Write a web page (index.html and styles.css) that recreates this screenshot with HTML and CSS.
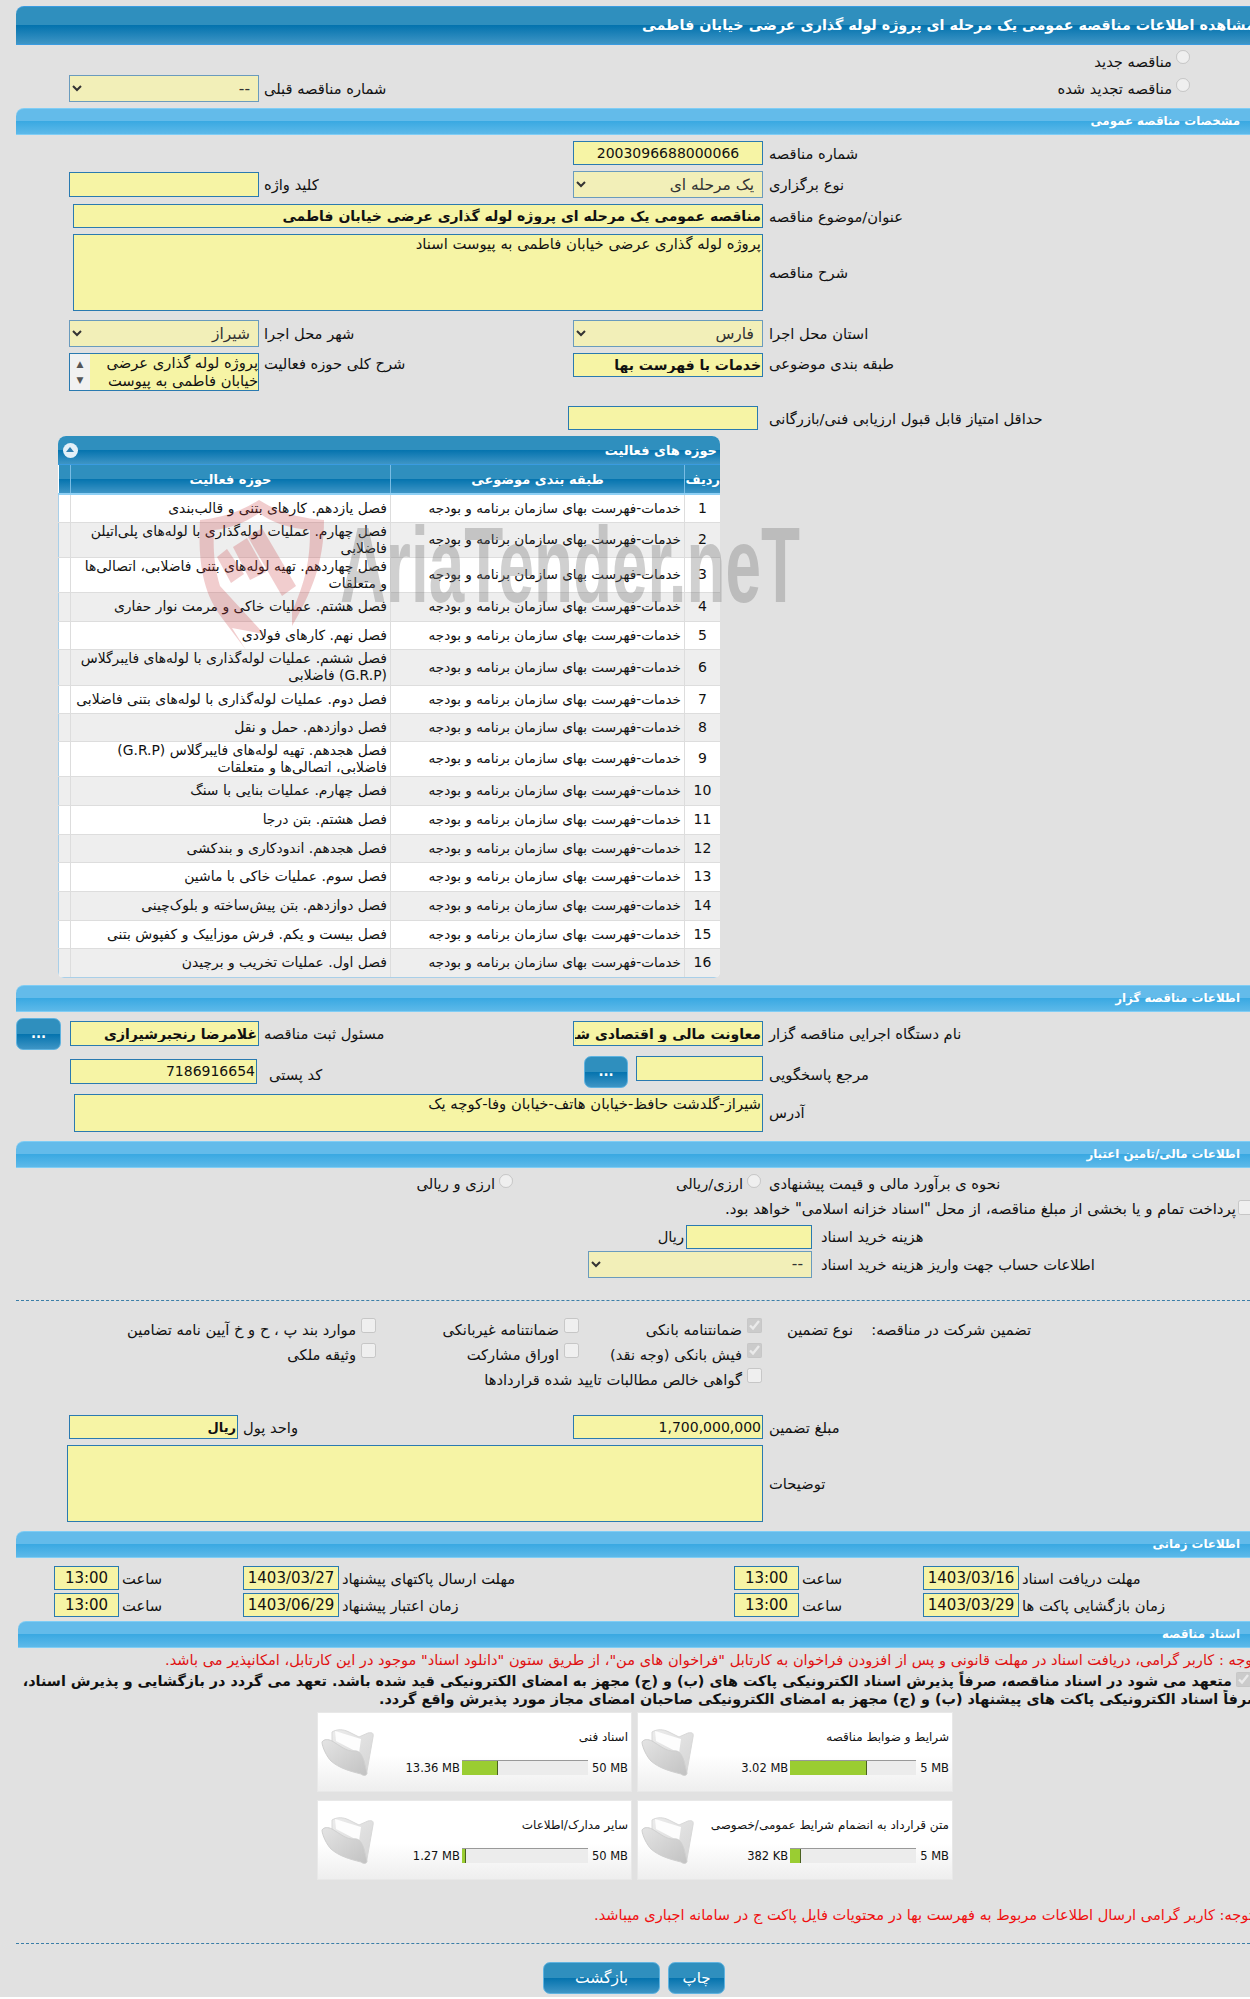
FILE: index.html
```html
<!DOCTYPE html>
<html lang="fa">
<head>
	<meta charset="utf-8">
	<title>مشاهده اطلاعات مناقصه</title>
	<link rel="stylesheet" href="styles.css">
</head>
<body>
<div class="page">
	<div class="page-title"><span dir="rtl">مشاهده اطلاعات مناقصه عمومی یک مرحله ای پروژه لوله گذاری عرضی خیابان فاطمی</span></div>

	<!-- نوع مناقصه -->
	<div class="row row-radio1">
		<div></div><div></div><div></div>
		<label class="opt opt-main"><input type="radio" disabled><span>مناقصه جدید</span></label>
	</div>
	<div class="row row-prev">
		<select class="ctl sel w-190" disabled><option>--</option></select>
		<div class="lbl lbl-b">شماره مناقصه قبلی</div>
		<div></div>
		<label class="opt opt-main"><input type="radio" disabled><span>مناقصه تجدید شده</span></label>
	</div>

	<div class="sec sec-1">مشخصات مناقصه عمومی</div>
	<div class="row mt-6">
		<div></div><div></div>
		<input class="ctl w-190 txt-center" value="2003096688000066" dir="ltr" readonly>
		<div class="lbl">شماره مناقصه</div>
	</div>
	<div class="row mt-6">
		<input class="ctl w-190 h-25" readonly>
		<div class="lbl lbl-b">کلید واژه</div>
		<select class="ctl sel w-190" disabled><option>یک مرحله ای</option></select>
		<div class="lbl">نوع برگزاری</div>
	</div>
	<div class="row mt-6">
		<input class="ctl span-3 w-690 bold" value="مناقصه عمومی یک مرحله ای پروژه لوله گذاری عرضی خیابان فاطمی" readonly>
		<div class="lbl">عنوان/موضوع مناقصه</div>
	</div>
	<div class="row mt-6">
		<textarea class="ctl span-3 w-690 h-77" readonly>پروژه لوله گذاری عرضی خیابان فاطمی به پیوست اسناد</textarea>
		<div class="lbl">شرح مناقصه</div>
	</div>
	<div class="row mt-9">
		<select class="ctl sel w-190" disabled><option>شیراز</option></select>
		<div class="lbl lbl-b">شهر محل اجرا</div>
		<select class="ctl sel w-190" disabled><option>فارس</option></select>
		<div class="lbl">استان محل اجرا</div>
	</div>
	<div class="row row-top mt-6">
		<div class="listbox w-190">
			<div class="listbox-bar"><span>▲</span><span>▼</span></div>
			<div class="listbox-text">پروژه لوله گذاری عرضی خیابان فاطمی به پیوست</div>
		</div>
		<div class="lbl lbl-b">شرح کلی حوزه فعالیت</div>
		<input class="ctl w-190 bold" value="خدمات با فهرست بها" readonly>
		<div class="lbl">طبقه بندی موضوعی</div>
	</div>
	<div class="row row-score">
		<div></div><div></div>
		<input class="ctl w-190 shift-5" readonly>
		<div class="lbl">حداقل امتیاز قابل قبول ارزیابی فنی/بازرگانی</div>
	</div>

	<!-- حوزه های فعالیت -->
	<div class="panel">
		<div class="panel-head">
			<span class="panel-toggle"></span>
			<span class="panel-title" dir="rtl">حوزه های فعالیت</span>
		</div>
		<table class="grid" dir="rtl">
			<thead>
				<tr><th class="c-n">ردیف</th><th class="c-s">طبقه بندی موضوعی</th><th class="c-a">حوزه فعالیت</th><th class="c-x"></th></tr>
			</thead>
			<tbody>
				<tr class="h28"><td class="c-n">1</td><td>خدمات-فهرست بهای سازمان برنامه و بودجه</td><td>فصل یازدهم. کارهای بتنی و قالب‌بندی</td><td></td></tr>
				<tr class="alt h35"><td class="c-n">2</td><td>خدمات-فهرست بهای سازمان برنامه و بودجه</td><td>فصل چهارم. عملیات لوله‌گذاری با لوله‌های پلی‌اتیلن فاضلابی</td><td></td></tr>
				<tr class="h35"><td class="c-n">3</td><td>خدمات-فهرست بهای سازمان برنامه و بودجه</td><td>فصل چهاردهم. تهیه لوله‌های بتنی فاضلابی، اتصالی‌ها و متعلقات</td><td></td></tr>
				<tr class="alt h29"><td class="c-n">4</td><td>خدمات-فهرست بهای سازمان برنامه و بودجه</td><td>فصل هشتم. عملیات خاکی و مرمت نوار حفاری</td><td></td></tr>
				<tr class="h28"><td class="c-n">5</td><td>خدمات-فهرست بهای سازمان برنامه و بودجه</td><td>فصل نهم. کارهای فولادی</td><td></td></tr>
				<tr class="alt h36"><td class="c-n">6</td><td>خدمات-فهرست بهای سازمان برنامه و بودجه</td><td>فصل ششم. عملیات لوله‌گذاری با لوله‌های فایبرگلاس (G.R.P) فاضلابی</td><td></td></tr>
				<tr class="h28"><td class="c-n">7</td><td>خدمات-فهرست بهای سازمان برنامه و بودجه</td><td>فصل دوم. عملیات لوله‌گذاری با لوله‌های بتنی فاضلابی</td><td></td></tr>
				<tr class="alt h28"><td class="c-n">8</td><td>خدمات-فهرست بهای سازمان برنامه و بودجه</td><td>فصل دوازدهم. حمل و نقل</td><td></td></tr>
				<tr class="h35"><td class="c-n">9</td><td>خدمات-فهرست بهای سازمان برنامه و بودجه</td><td>فصل هجدهم. تهیه لوله‌های فایبرگلاس (G.R.P) فاضلابی، اتصالی‌ها و متعلقات</td><td></td></tr>
				<tr class="alt h29"><td class="c-n">10</td><td>خدمات-فهرست بهای سازمان برنامه و بودجه</td><td>فصل چهارم. عملیات بنایی با سنگ</td><td></td></tr>
				<tr class="h29"><td class="c-n">11</td><td>خدمات-فهرست بهای سازمان برنامه و بودجه</td><td>فصل هشتم. بتن درجا</td><td></td></tr>
				<tr class="alt h28"><td class="c-n">12</td><td>خدمات-فهرست بهای سازمان برنامه و بودجه</td><td>فصل هجدهم. اندودکاری و بندکشی</td><td></td></tr>
				<tr class="h29"><td class="c-n">13</td><td>خدمات-فهرست بهای سازمان برنامه و بودجه</td><td>فصل سوم. عملیات خاکی با ماشین</td><td></td></tr>
				<tr class="alt h29"><td class="c-n">14</td><td>خدمات-فهرست بهای سازمان برنامه و بودجه</td><td>فصل دوازدهم. بتن پیش‌ساخته و بلوک‌چینی</td><td></td></tr>
				<tr class="h28"><td class="c-n">15</td><td>خدمات-فهرست بهای سازمان برنامه و بودجه</td><td>فصل بیست و یکم. فرش موزاییک و کفپوش بتنی</td><td></td></tr>
				<tr class="alt h29"><td class="c-n">16</td><td>خدمات-فهرست بهای سازمان برنامه و بودجه</td><td>فصل اول. عملیات تخریب و برچیدن</td><td></td></tr>
			</tbody>
		</table>
	</div>

	<!-- واترمارک روی جدول -->
	<svg class="watermark" width="620" height="190" viewBox="0 -40 620 190">
		<g fill="#c8383a" fill-opacity="0.25">
			<path fill-rule="evenodd" d="M69 0C50 12 30 18 10 20C8 60 12 92 32 118L56 150L42 128L74 134L30 86C24 66 23 48 24 30C42 28 56 22 69 13C82 22 96 28 120 30C120 60 116 80 102 112L102 126C122 92 134 62 134 20C108 18 88 12 69 0Z"/>
			<polygon points="58,37 72,28 106,86 92,96"/>
			<polygon points="43,47 57,38 76,72 60,80"/>
			<polygon points="27,57 37,49 54,74 41,83"/>
		</g>
		<text class="watermark-text" x="150" y="102" textLength="460" lengthAdjust="spacingAndGlyphs">AriaTender.neT</text>
	</svg>

	<div class="sec sec-2">اطلاعات مناقصه گزار</div>
	<div class="row row-org">
		<div class="pick">
			<button class="btn btn-pick" type="button">...</button>
			<input class="ctl w-189 h-25 bold" value="غلامرضا رنجبرشیرازی" readonly>
		</div>
		<div class="lbl lbl-b">مسئول ثبت مناقصه</div>
		<input class="ctl w-190 h-25 bold" value="معاونت مالی و اقتصادی شهرداری شیراز" readonly>
		<div class="lbl">نام دستگاه اجرایی مناقصه گزار</div>
	</div>
	<div class="row row-ref">
		<input class="ctl w-187 h-25 drop-3" value="7186916654" dir="rtl" readonly>
		<div class="lbl lbl-postal">کد پستی</div>
		<div class="pick pick-end">
			<button class="btn btn-pick-sm" type="button">...</button>
			<input class="ctl w-127 h-25" readonly>
		</div>
		<div class="lbl">مرجع پاسخگویی</div>
	</div>
	<div class="row mt-6">
		<textarea class="ctl span-3 w-689 h-38" readonly>شیراز-گلدشت حافظ-خیابان هاتف-خیابان وفا-کوچه یک</textarea>
		<div class="lbl">آدرس</div>
	</div>

	<div class="sec sec-3">اطلاعات مالی/تامین اعتبار</div>
	<div class="row-money mt-6">
		<div class="money-opts" dir="rtl">
			<label class="opt opt-first"><input type="radio" disabled><span>ارزی/ریالی</span></label>
			<label class="opt"><input type="radio" disabled><span>ارزی و ریالی</span></label>
		</div>
		<div class="lbl">نحوه ی برآورد مالی و قیمت پیشنهادی</div>
	</div>
	<label class="pay-row" dir="rtl"><input type="checkbox" disabled><span>پرداخت تمام و یا بخشی از مبلغ مناقصه، از محل "اسناد خزانه اسلامی" خواهد بود.</span></label>
	<div class="row-doc row-doc-cost">
		<div class="doc-ctl">
			<span class="unit" dir="rtl">ریال</span>
			<input class="ctl w-126" readonly>
		</div>
		<div class="lbl lbl-doc">هزینه خرید اسناد</div>
	</div>
	<div class="row-doc row-doc-acc">
		<div class="doc-ctl">
			<select class="ctl sel w-224" disabled><option>--</option></select>
		</div>
		<div class="lbl lbl-doc">اطلاعات حساب جهت واریز هزینه خرید اسناد</div>
	</div>

	<div class="dots dots-1"></div>

	<!-- تضمین -->
	<div class="guar" dir="rtl">
		<div>تضمین شرکت در مناقصه:</div>
		<div>نوع تضمین</div>
		<label class="opt"><input type="checkbox" checked disabled><span>ضمانتنامه بانکی</span></label>
		<label class="opt"><input type="checkbox" disabled><span>ضمانتنامه غیربانکی</span></label>
		<label class="opt"><input type="checkbox" disabled><span>موارد بند پ ، ح و خ آیین نامه تضامین</span></label>
		<div></div>
		<div></div>
		<label class="opt"><input type="checkbox" checked disabled><span>فیش بانکی (وجه نقد)</span></label>
		<label class="opt"><input type="checkbox" disabled><span>اوراق مشارکت</span></label>
		<label class="opt"><input type="checkbox" disabled><span>وثیقه ملکی</span></label>
		<div></div>
		<div></div>
		<label class="opt guar-wide"><input type="checkbox" disabled><span>گواهی خالص مطالبات تایید شده قراردادها</span></label>
	</div>

	<div class="row row-amount">
		<div class="unit-field">
			<input class="ctl w-169 bold-unit" value="ریال" readonly>
			<div class="lbl lbl-b">واحد پول</div>
		</div>
		<input class="ctl w-190 num" value="1,700,000,000" dir="rtl" readonly>
		<div class="lbl">مبلغ تضمین</div>
	</div>
	<div class="row mt-6">
		<textarea class="ctl span-3 w-696 h-77" readonly></textarea>
		<div class="lbl">توضیحات</div>
	</div>

	<div class="sec sec-4">اطلاعات زمانی</div>
	<div class="times mt-8">
		<div class="t-cell t-first"><input class="ctl t-time" value="13:00" readonly><span>ساعت</span></div>
		<div class="t-cell"><input class="ctl t-date" value="1403/03/27" readonly><span>مهلت ارسال پاکتهای پیشنهاد</span></div>
		<div class="t-cell"><input class="ctl t-time" value="13:00" readonly><span>ساعت</span></div>
		<div class="t-cell"><input class="ctl t-date" value="1403/03/16" readonly><span>مهلت دریافت اسناد</span></div>
	</div>
	<div class="times mt-3">
		<div class="t-cell t-first"><input class="ctl t-time" value="13:00" readonly><span>ساعت</span></div>
		<div class="t-cell"><input class="ctl t-date" value="1403/06/29" readonly><span>زمان اعتبار پیشنهاد</span></div>
		<div class="t-cell"><input class="ctl t-time" value="13:00" readonly><span>ساعت</span></div>
		<div class="t-cell"><input class="ctl t-date" value="1403/03/29" readonly><span>زمان بازگشایی پاکت ها</span></div>
	</div>

	<div class="sec sec-5">اسناد مناقصه</div>
	<div class="clip note-1"><span dir="rtl">توجه : کاربر گرامی، دریافت اسناد در مهلت قانونی و پس از افزودن فراخوان به کارتابل "فراخوان های من"، از طریق ستون "دانلود اسناد" موجود در این کارتابل، امکانپذیر می باشد.</span></div>
	<label class="pledge" dir="rtl"><input type="checkbox" checked disabled><span>متعهد می شود در اسناد مناقصه، صرفاً پذیرش اسناد الکترونیکی پاکت های (ب) و (ج) مجهز به امضای الکترونیکی قید شده باشد. تعهد می گردد در بازگشایی و پذیرش اسناد،</span></label>
	<div class="clip pledge-2"><span dir="rtl">صرفاً اسناد الکترونیکی پاکت های پیشنهاد (ب) و (ج) مجهز به امضای الکترونیکی صاحبان امضای مجاز مورد پذیرش واقع گردد.</span></div>

	<div class="cards" dir="rtl">
		<div class="card">
			<div class="card-title">شرایط و ضوابط مناقصه</div>
			<div class="meter"><span class="meter-max" dir="ltr">5 MB</span><span class="bar"><i class="fill" style="width:77px"></i></span><span class="meter-val" dir="ltr">3.02 MB</span></div>
			<svg class="folder" width="54" height="48" viewBox="0 0 54 48"><use href="#folder-icon"/></svg>
		</div>
		<div class="card">
			<div class="card-title">اسناد فنی</div>
			<div class="meter"><span class="meter-max" dir="ltr">50 MB</span><span class="bar"><i class="fill" style="width:36px"></i></span><span class="meter-val" dir="ltr">13.36 MB</span></div>
			<svg class="folder" width="54" height="48" viewBox="0 0 54 48"><use href="#folder-icon"/></svg>
		</div>
		<div class="card">
			<div class="card-title">متن قرارداد به انضمام شرایط عمومی/خصوصی</div>
			<div class="meter"><span class="meter-max" dir="ltr">5 MB</span><span class="bar"><i class="fill" style="width:11px"></i></span><span class="meter-val" dir="ltr">382 KB</span></div>
			<svg class="folder" width="54" height="48" viewBox="0 0 54 48"><use href="#folder-icon"/></svg>
		</div>
		<div class="card">
			<div class="card-title">سایر مدارک/اطلاعات</div>
			<div class="meter"><span class="meter-max" dir="ltr">50 MB</span><span class="bar"><i class="fill" style="width:4px"></i></span><span class="meter-val" dir="ltr">1.27 MB</span></div>
			<svg class="folder" width="54" height="48" viewBox="0 0 54 48"><use href="#folder-icon"/></svg>
		</div>
	</div>

	<div class="clip note-2"><span dir="rtl">توجه: کاربر گرامی ارسال اطلاعات مربوط به فهرست بها در محتویات فایل پاکت ج در سامانه اجباری میباشد.</span></div>
	<div class="dots dots-2"></div>

	<div class="actions">
		<button class="btn btn-back" type="button">بازگشت</button>
		<button class="btn btn-print" type="button">چاپ</button>
	</div>
</div>

<svg class="defs" width="0" height="0">
	<defs>
		<linearGradient id="folder-back" x1="0" y1="0" x2="1" y2="1"><stop offset="0" stop-color="#ececec"/><stop offset="1" stop-color="#d4d4d4"/></linearGradient>
		<linearGradient id="folder-front" x1="0" y1="0" x2="1" y2="1"><stop offset="0" stop-color="#e4e4e4"/><stop offset="1" stop-color="#c2c2c2"/></linearGradient>
		<g id="folder-icon">
			<path d="M11 3C16 0 22 0 28 3L38 8L47 4C51 3 53 4 52 8L46 42C45 46 43 46 41 44L28 26L11 12Z" fill="url(#folder-back)" stroke="#d8d8d8"/>
			<path d="M14 2L40 10L38 24L15 12Z" fill="#fdfdfd"/>
			<path d="M1 13C3 10 7 10 11 12C18 16 26 23 33 22C38 21 41 26 43 32L46 44C46 47 42 47 40 45C28 42 18 39 10 32C6 28 1 18 1 13Z" fill="url(#folder-front)" stroke="#cfcfcf"/>
		</g>
	</defs>
</svg>
</body>
</html>
```

FILE: styles.css
```css
*{
	box-sizing: border-box;
}
html{
	background: #fff;
}
body{
	margin: 0;
	height: 1997px;
	overflow: hidden;
	background: #e1e1e1;
	color: #111;
	font-family: "DejaVu Sans", sans-serif;
	font-size: 14.7px;
}
.page{
	position: relative;
	width: 1250px;
	padding: 6px 0 0 16px;
}
.page-title{
	height: 39px;
	padding-left: 626px;
	line-height: 36px;
	font-size: 14.3px;
	font-weight: bold;
	color: #fff;
	white-space: nowrap;
	overflow: hidden;
	border-radius: 8px 0 0 0;
	border-top: 1px solid #3a9be0;
	border-bottom: 1px solid #3a9be0;
	background: linear-gradient(#2f8fbe 0, #2f8fbe 49%, #0473ae 50%, #3e95c5 100%);
}
.sec{
	height: 27px;
	padding-right: 10px;
	line-height: 24px;
	direction: rtl;
	font-size: 11.8px;
	font-weight: bold;
	color: #fff;
	border-radius: 8px 0 0 0;
	border-top: 1px solid #7fcdf5;
	border-bottom: 1px solid #7fcdf5;
	background: linear-gradient(#63bbea 0, #63bbea 48%, #3aa9e2 50%, #5db9e9 100%);
}
.sec-2{
	margin-top: 7px;
}
.sec-3{
	margin-top: 9px;
}
.sec-4{
	margin-top: 9px;
}
.sec-5{
	margin: 4px 0 0 2px;
}

/* form rows */
.row{
	display: grid;
	grid-template-columns: 243px 241px 263px 1fr;
	align-items: center;
}
.row-top{
	align-items: start;
}
.row-top .lbl{
	padding-top: 2px;
}
.row-radio1{
	height: 24px;
	margin-top: 4px;
}
.row-prev{
	margin-top: 2px;
	margin-bottom: 6px;
}
.row-score{
	margin-top: 15px;
}
.row-org{
	margin-top: 6px;
}
.row-ref{
	margin-top: 6px;
	align-items: start;
}
.row-amount{
	margin-top: 23.5px;
}
.mt-3{
	margin-top: 3px;
}
.mt-6{
	margin-top: 6px;
}
.mt-8{
	margin-top: 8px;
}
.mt-9{
	margin-top: 9px;
}
.lbl{
	direction: rtl;
	text-align: left;
	padding-left: 6px;
	white-space: nowrap;
}
.lbl-b{
	padding-left: 5px;
}
.row-ref .lbl{
	padding-top: 10px;
}
.row-ref .lbl-postal{
	padding-left: 10px;
}
.ctl{
	display: block;
	justify-self: end;
	height: 24px;
	margin: 0;
	padding: 0 1px;
	direction: rtl;
	font-family: inherit;
	font-size: 14px;
	color: #111;
	background: #f6f4a5;
	border: 1px solid #2a7ab0;
	border-radius: 0;
	outline: none;
	resize: none;
}
textarea.ctl{
	font-size: 14.8px;
	overflow: hidden;
}
.bold{
	font-weight: bold;
}
.num{
	font-size: 14px;
}
.bold-unit{
	font-weight: bold;
	font-size: 13px;
}
.txt-center{
	text-align: center;
}
.sel{
	height: 27px;
	padding: 0 4px;
	font-size: 15.5px;
	color: #333;
	opacity: 1;
	background-color: #f2efb8;
	border-color: #6a9bbd;
}
.span-3{
	grid-column: 1 / 4;
}
.shift-5{
	margin-right: 5px;
}
.drop-3{
	margin: 3px 2px 0 0;
}
.w-126{ width: 126px; }
.w-127{ width: 127px; }
.w-169{ width: 169px; }
.w-187{ width: 187px; }
.w-189{ width: 189px; }
.w-190{ width: 190px; }
.w-224{ width: 224px; }
.w-689{ width: 689px; }
.w-690{ width: 690px; }
.w-696{ width: 696px; }
.h-25{ height: 25px; }
.h-38{ height: 38px; }
.h-77{ height: 77px; }

.opt{
	display: flex;
	align-items: center;
	gap: 4px;
	white-space: nowrap;
	direction: rtl;
}
.opt input{
	width: 14px;
	height: 14px;
	margin: 0 0 8px 0;
	flex: none;
}
.opt-main{
	padding-right: 60px;
}
.listbox{
	display: flex;
	justify-self: end;
	height: 38px;
	border: 1px solid #2a7ab0;
	background: #f6f4a5;
}
.listbox-bar{
	display: flex;
	flex-direction: column;
	justify-content: space-between;
	width: 20px;
	flex: none;
	padding: 5px 0;
	text-align: center;
	font-size: 9px;
	color: #555;
	background: #f1f1f1;
}
.listbox-text{
	direction: rtl;
	line-height: 18px;
	font-size: 14.7px;
	overflow: hidden;
}
.unit-field{
	grid-column: 1 / 3;
	display: flex;
	align-items: center;
	padding-left: 53px;
}

/* panel */
.panel{
	width: 662px;
	margin: 6px 0 0 42px;
	border-radius: 8px 8px 6px 6px;
	overflow: hidden;
	background: #fff;
}
.panel-head{
	display: flex;
	justify-content: space-between;
	align-items: center;
	height: 29px;
	padding: 0 3px 0 5px;
	font-weight: bold;
	font-size: 13px;
	color: #fff;
	border-bottom: 1px solid #3a9be0;
	background: linear-gradient(#2f8fbe 0, #2f8fbe 49%, #0473ae 50%, #3e95c5 100%);
}
.panel-toggle{
	position: relative;
	width: 15px;
	height: 15px;
	border-radius: 50%;
	background: #e3f0f8;
}
.panel-toggle::after{
	content: "";
	position: absolute;
	left: 3px;
	top: 4px;
	border: 4.5px solid transparent;
	border-top: 0;
	border-bottom: 5px solid #2f7fb0;
}
.grid{
	width: 662px;
	table-layout: fixed;
	border-collapse: collapse;
	font-size: 13.6px;
}
.grid th{
	height: 29px;
	padding: 0;
	font-size: 13px;
	color: #fff;
	border-left: 1px solid #79bce4;
	border-bottom: 2px solid #8fd0f5;
	background: linear-gradient(#2f8fbe 0, #2f8fbe 49%, #0473ae 50%, #3e95c5 100%);
}
.grid th:last-child{
	border-left: 0;
}
.grid td{
	padding: 0 3px;
	line-height: 17px;
	border-left: 1px solid #ddd;
	border-bottom: 1px solid #ddd;
}
.grid td:nth-child(3){
	font-size: 13.9px;
}
.grid td:first-child{
	border-right: 1px solid #a9cfe8;
}
.grid td:last-child{
	border-left: 1px solid #a9cfe8;
}
.grid tr:last-child td{
	border-bottom: 1px solid #a9cfe8;
}
.grid .alt td{
	background: #eee;
}
.c-n{
	width: 36px;
}
td.c-n{
	text-align: center;
	font-size: 14px;
}
.c-s{
	width: 294px;
}
.c-a{
	width: 320px;
}
.c-x{
	width: 12px;
}
.h28 td{ height: 28px; }
.h29 td{ height: 29px; }
.h35 td{ height: 35px; }
.h36 td{ height: 36px; }

.watermark{
	position: absolute;
	left: 190px;
	top: 460px;
	pointer-events: none;
}
.watermark-text{
	font-family: "Liberation Sans", sans-serif;
	font-size: 108px;
	font-weight: bold;
	fill: #707070;
	fill-opacity: 0.33;
}

/* org and money */
.pick{
	display: flex;
	justify-content: space-between;
	align-items: center;
}
.pick-end{
	justify-content: flex-end;
	align-items: flex-start;
	gap: 8px;
}
.btn{
	display: block;
	padding: 0;
	font-family: inherit;
	font-weight: bold;
	color: #fff;
	border: 1px solid #5fb3e0;
	border-radius: 7px;
	background: linear-gradient(#2f8fbe 0, #2f8fbe 49%, #0473ae 50%, #3e95c5 100%);
}
.btn-pick{
	width: 45px;
	height: 32px;
}
.btn-pick-sm{
	width: 44px;
	height: 32px;
}
.row-money{
	display: grid;
	grid-template-columns: 747px 1fr;
	align-items: center;
	height: 20px;
}
.money-opts{
	display: flex;
}
.money-opts .opt input{
	margin-bottom: 6px;
}
.opt-first{
	width: 250px;
	padding-right: 2px;
}
.pay-row{
	display: flex;
	gap: 2px;
	align-items: center;
	height: 20px;
	margin-top: 5px;
	font-size: 15px;
	white-space: nowrap;
}
.pay-row input{
	width: 15px;
	height: 15px;
	margin: 0 -3px 3px 0;
	flex: none;
}
.row-doc{
	display: grid;
	grid-template-columns: 796px 1fr;
	align-items: center;
}
.row-doc-cost{
	margin-top: 6px;
}
.row-doc-acc{
	margin-top: 2px;
}
.doc-ctl{
	display: flex;
	justify-content: flex-end;
	align-items: center;
}
.unit{
	margin-right: 2px;
}
.lbl-doc{
	padding-left: 9px;
}
.dots{
	border-top: 1px dashed #3a7ea8;
}
.dots-1{
	margin-top: 22px;
}
.dots-2{
	margin-top: 19px;
}

/* guarantee */
.guar{
	display: grid;
	grid-template-columns: 178px 91px 183px 203px 1fr;
	grid-auto-rows: 25px;
	align-items: center;
	margin: 16px 219px 0 0;
	white-space: nowrap;
}
.guar .opt{
	gap: 5px;
}
.guar input{
	width: 15px;
	height: 15px;
	margin-bottom: 7px;
}
.guar-wide{
	grid-column: 3 / 6;
}

/* dates */
.times{
	display: grid;
	grid-template-columns: 227px 491px 189px 1fr;
}
.t-cell{
	display: flex;
	align-items: center;
	gap: 3px;
}
.t-cell span{
	direction: rtl;
	white-space: nowrap;
}
.t-first{
	padding-left: 38px;
}
.t-time{
	width: 65px;
	font-size: 15px;
	text-align: center;
}
.t-date{
	width: 96px;
	font-size: 15px;
	text-align: center;
}

/* documents */
.clip{
	white-space: nowrap;
	overflow: hidden;
	line-height: 18px;
}
.note-1{
	margin-top: 3px;
	padding-left: 149px;
	font-size: 14.6px;
	color: #e01010;
}
.pledge{
	display: flex;
	gap: 4px;
	height: 18px;
	line-height: 18px;
	margin-top: 3px;
	font-size: 14.35px;
	font-weight: bold;
	white-space: nowrap;
	color: #111;
}
.pledge input{
	width: 15px;
	height: 15px;
	margin: 0 -1px 0 0;
	flex: none;
}
.pledge-2{
	padding-left: 363px;
	font-size: 14.35px;
	font-weight: bold;
}
.cards{
	display: grid;
	grid-template-columns: 316px 315px;
	grid-auto-rows: 80px;
	gap: 8px 5px;
	width: 636px;
	margin: 4px 0 0 301px;
}
.card{
	position: relative;
	padding: 15px 3px 0 0;
	border: 1px solid #e8e8e8;
	background: linear-gradient(#fff 55%, #eee 100%);
}
.card-title{
	height: 18px;
	line-height: 18px;
	font-size: 12px;
	white-space: nowrap;
}
.meter{
	display: flex;
	align-items: center;
	height: 15px;
	margin-top: 14px;
	font-size: 11.5px;
	white-space: nowrap;
}
.meter-max{
	padding-left: 2px;
}
.meter-val{
	margin-right: 2px;
}
.bar{
	display: block;
	direction: ltr;
	width: 126px;
	height: 15px;
	margin-right: 2px;
	border-top: 1px solid #999;
	background: #ececec;
}
.fill{
	display: block;
	height: 14px;
	background: #9acd32;
	border-right: 1px solid #4a6020;
}
.folder{
	position: absolute;
	left: 3px;
	top: 16px;
}
.note-2{
	margin-top: 26px;
	padding-left: 578px;
	font-size: 14.6px;
	color: #f01010;
}
.actions{
	display: flex;
	gap: 8px;
	margin: 18px 0 0 527px;
}
.btn-back{
	width: 117px;
	height: 32px;
	font-size: 15.5px;
	font-weight: normal;
}
.btn-print{
	width: 57px;
	height: 32px;
	font-size: 15px;
	font-weight: normal;
}
.defs{
	position: absolute;
}
```
